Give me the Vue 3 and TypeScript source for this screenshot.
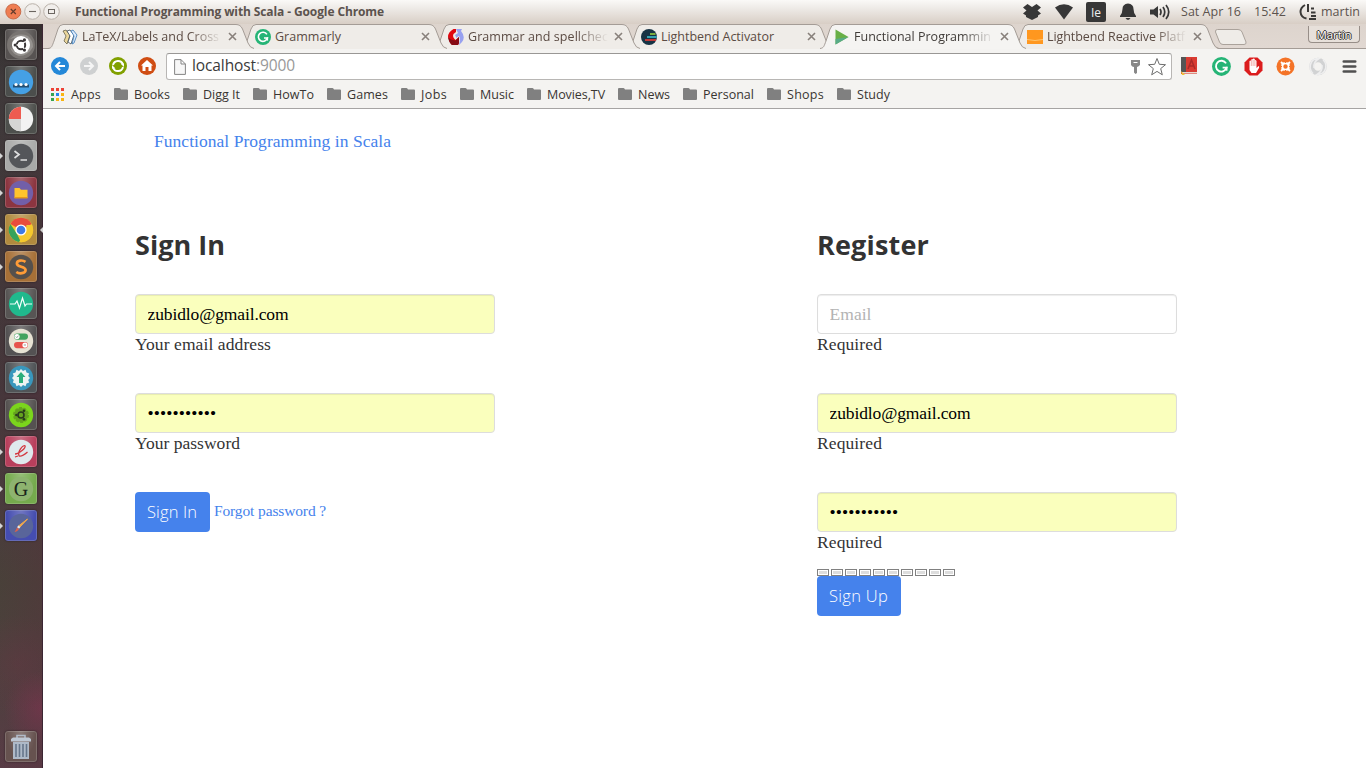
<script setup lang="ts">
import type { Directive } from 'vue'

// Spreads the letters of an element so its text spans the given width in pixels.
const vFit: Directive<HTMLElement, number> = {
  mounted(el, binding) {
    const text = el instanceof HTMLInputElement ? el.value || el.placeholder : (el.textContent ?? '').trim()
    const style = getComputedStyle(el)
    const ctx = document.createElement('canvas').getContext('2d')
    if (!ctx || !text) return
    ctx.font = `${style.fontWeight} ${style.fontSize} ${style.fontFamily}`
    const natural = ctx.measureText(text).width
    el.style.letterSpacing = `${((binding.value - natural) / text.length).toFixed(3)}px`
  },
}

interface LauncherItem {
  name: string
  tile: string
  running: boolean
  focused?: boolean
  art: string
}

const launcher: LauncherItem[] = [
  { name: 'dash', tile: '#575352', running: false, art: '<circle cx="16" cy="16" r="14" fill="#797572"/><path d="M5 10Q13 3 23 7Q28 11 28 18Q23 27 14 27Q7 25 5 18Q9 23 16 24Q23 21 24 15Q21 9 14 8Q9 9 5 10Z" fill="#a5a19e" opacity=".65"/><circle cx="16" cy="16" r="9" fill="#fff"/><circle cx="16" cy="16" r="4.2" fill="none" stroke="#393536" stroke-width="2"/><path d="M16 16L23 10M16 16L22 23M16 16H7" stroke="#fff" stroke-width="1.4"/><circle cx="16" cy="16" r="3" fill="#fff"/><circle cx="19.4" cy="10.9" r="1.6" fill="#393536"/><circle cx="19.4" cy="21.1" r="1.6" fill="#393536"/><circle cx="10.2" cy="16" r="1.6" fill="#393536"/>' },
  { name: 'messages', tile: '#4b4e4c', running: false, art: '<circle cx="16" cy="16" r="12.2" fill="#45a0e5"/><path d="M8 18.5H24V21.5H8Z" fill="#244f73"/><circle cx="11" cy="18.5" r="1.6" fill="#fff"/><circle cx="16" cy="18.5" r="1.6" fill="#fff"/><circle cx="21" cy="18.5" r="1.6" fill="#fff"/>' },
  { name: 'disk usage', tile: '#4e504d', running: false, art: '<circle cx="16" cy="16" r="12.2" fill="#f2f2f2"/><path d="M16 16V3.8A12.2 12.2 0 0 0 3.8 16Z" fill="#ee5b50"/><path d="M16 16H3.8A12.2 12.2 0 0 0 16 28.2Z" fill="#d5d5d4"/>' },
  { name: 'terminal', tile: '#a9aaa9', running: true, art: '<circle cx="16" cy="16" r="12.2" fill="#54565a"/><path d="M9.5 11L14 14.5L9.5 18M15.5 20H22" fill="none" stroke="#dedfe0" stroke-width="1.7"/>' },
  { name: 'files', tile: '#8c3540', running: true, art: '<circle cx="16" cy="16" r="12.2" fill="#725fa8"/><path d="M9.5 11H14.5L16 12.7H22.5V21H9.5Z" fill="#ffc52b"/><path d="M9.5 20H22.5V21.5H9.5Z" fill="#e79a19"/>' },
  { name: 'chrome', tile: '#b18a3e', running: true, focused: true, art: '<circle cx="16" cy="16" r="12.2" fill="#f5c82d"/><path d="M16 16L5.4 9.9A12.2 12.2 0 0 1 26.6 9.9Z" fill="#e94c3c"/><path d="M5.4 9.9L12 20L16 28.2A12.2 12.2 0 0 1 5.4 9.9Z" fill="#35a35b"/><path d="M14 28L20.5 17L21.5 11H27A12.2 12.2 0 0 1 14 28Z" fill="#f5c82d"/><circle cx="16" cy="16" r="5.6" fill="#fff"/><circle cx="16" cy="16" r="4.3" fill="#3e7ae5"/>' },
  { name: 'sublime', tile: '#a77037', running: true, art: '<circle cx="16" cy="16" r="12.2" fill="#55504c"/><path d="M20.5 10.8C17.5 8.8 12 9 11.9 12.5C11.9 16.6 20.6 14.8 20.6 19C20.5 22.8 14 23 11.3 21" fill="none" stroke="#ff9c37" stroke-width="2.7"/>' },
  { name: 'monitor', tile: '#575554', running: false, art: '<circle cx="16" cy="16" r="12.2" fill="#20b98d"/><path d="M5 16H10L12 13L14.5 20L17.5 10L20 18L21.5 16H27" fill="none" stroke="#f4fffc" stroke-width="1.2"/>' },
  { name: 'tweaks', tile: '#545253', running: false, art: '<circle cx="16" cy="16" r="12.2" fill="#e7e3d4"/><rect x="9" y="8.5" width="14" height="6.2" rx="3.1" fill="#43a35e"/><rect x="9" y="17" width="14" height="6.2" rx="3.1" fill="#e7524d"/><circle cx="12" cy="11.6" r="2.6" fill="#fff"/><circle cx="20" cy="20.1" r="2.6" fill="#fff"/><path d="M10.8 11.6L11.8 12.6L13.4 10.7M18.8 20H21" stroke="#697568" stroke-width=".7" fill="none"/>' },
  { name: 'updater', tile: '#505457', running: false, art: '<circle cx="16" cy="16" r="12.2" fill="#3997bd"/><path d="M16 7L18 9L20.5 7.8L21.5 10.5L24.2 11.5L23.2 14L25 16L23.2 18L24.2 20.5L21.5 21.5L20.5 24.2L18 23L16 25L14 23L11.5 24.2L10.5 21.5L7.800 20.5L8.800 18L7 16L8.800 14L7.800 11.5L10.5 10.5L11.5 7.800L14 9Z" fill="#edf4f2"/><path d="M16 10L20.5 15H18V21H14V15H11.5Z" fill="#2bae7b"/>' },
  { name: 'ubuntu tweak', tile: '#555251', running: false, art: '<circle cx="16" cy="16" r="12.2" fill="#7bd51c"/><circle cx="16" cy="16" r="7" fill="#65a31f" stroke="#65a31f" stroke-width="2" stroke-dasharray="3 1.4"/><circle cx="16" cy="16" r="3" fill="none" stroke="#293a1d" stroke-width="1.6"/><circle cx="19" cy="11.8" r="1.3" fill="#293a1d"/><circle cx="19" cy="20.2" r="1.3" fill="#293a1d"/><circle cx="11.4" cy="16" r="1.3" fill="#293a1d"/>' },
  { name: 'reader', tile: '#b83f5c', running: true, art: '<circle cx="16" cy="16" r="12.2" fill="#dfe9ed"/><path d="M10 18C14 18 21.5 11.5 20 9.8C17.5 8.5 12.5 16 14 19.8C16 21.5 19 19 22.5 16M10 21L13 20" fill="none" stroke="#d33740" stroke-width="1.3"/>' },
  { name: 'notes', tile: '#75aa4d', running: true, art: '<circle cx="16" cy="16" r="12.2" fill="#8db36f"/><text x="16" y="22.5" text-anchor="middle" font-family="Liberation Serif, serif" font-size="20" fill="#18231a">G</text>' },
  { name: 'paint', tile: '#454db0', running: true, art: '<circle cx="16" cy="16" r="12.2" fill="#59659a"/><path d="M22.5 9L15 17L13.5 16Z" fill="#efa84d" stroke="#efa84d" stroke-width="1"/><path d="M15.4 17L14 18.7L12 17.2L13.4 15.6Z" fill="#e7e7e7"/><path d="M12 17.5L14 19C13 21 11 22 9.5 21.8Q11 20.3 12 17.5Z" fill="#dc614b"/>' },
]

const trash = '<path d="M12 7V4.5H20V7" fill="none" stroke="#b0bac8" stroke-width="1.6"/><path d="M6 8L8 6.5H24L26 8V10.5H6Z" fill="#bdc7d4"/><path d="M8 11H24V28H8Z" fill="#aeb9c8"/><path d="M11 13V26M14.5 13V26M18 13V26M21.5 13V26" stroke="#66768b" stroke-width="1.6"/>'

interface Tab {
  title: string
  width: number
  active?: boolean
  faded?: boolean
  icon: string
}

const grammarly = '<circle cx="8" cy="8" r="8" fill="#25b476"/><path d="M11.9 5.4A4.6 4.6 0 1 0 12.4 9H9" fill="none" stroke="#fff" stroke-width="1.6"/><path d="M12.4 8.3V11.6" stroke="#fff" stroke-width="1.4"/>'

const tabs: Tab[] = [
  { title: 'LaTeX/Labels and Cross', width: 137, faded: true, icon: '<path d="M1 2L4 1L8 6L5 15L2 12L4 7Z" fill="#ead69c" stroke="#56513b" stroke-width=".7"/><path d="M5 2L8 1L12 6L9 15L6 13L8 7Z" fill="#fff" stroke="#3d4c57" stroke-width=".8"/><path d="M9 2L11 1L15 6L12 14L10 15L12 7Z" fill="#dceafb" stroke="#3878b7" stroke-width=".8"/>' },
  { title: 'Grammarly', width: 66, icon: grammarly },
  { title: 'Grammar and spellchec', width: 140, faded: true, icon: '<path d="M5.5 0Q0 3 0 8Q1 13 4 16H10L11 14V8L7.5 11Q4 8 5.5 5L8 3V0Z" fill="#e00810"/><path d="M0 8Q1 14 4 16H10L11 14V8L7.5 11.5Q2 11 0 8Z" fill="#860b14"/><path d="M8 0H14L13 2Q18 8 14 13L11 16Q13 8 10.5 7L8.5 9L7 6L10 4Z" fill="#98a1f0"/>' },
  { title: 'Lightbend Activator', width: 113, icon: '<circle cx="8" cy="8" r="8" fill="#173344"/><path d="M9 5H14.5" stroke="#86bd40" stroke-width="1.8"/><path d="M6 8H15.8" stroke="#39afbe" stroke-width="1.8"/><path d="M4 11H15" stroke="#d33b37" stroke-width="1.8"/>' },
  { title: 'Functional Programmin', width: 137, active: true, faded: true, icon: '<path d="M1.5 .5L14.5 8L1.5 15.5Z" fill="#68af46"/><path d="M1.5 10L14.5 8L1.5 15.5Z" fill="#58ab88"/>' },
  { title: 'Lightbend Reactive Platf', width: 138, faded: true, icon: '<rect y="1" width="16" height="14" fill="#ff971f"/><path d="M0 10.5Q8 12.5 16 10.5" fill="none" stroke="#ffc56e"/>' },
]

const bookmarks = [
  { label: 'Books', width: 36, step: 69 },
  { label: 'Digg It', width: 37, step: 70 },
  { label: 'HowTo', width: 41, step: 74 },
  { label: 'Games', width: 41, step: 74 },
  { label: 'Jobs', width: 26, step: 59 },
  { label: 'Music', width: 34, step: 67 },
  { label: 'Movies,TV', width: 58, step: 91 },
  { label: 'News', width: 32, step: 65 },
  { label: 'Personal', width: 51, step: 84 },
  { label: 'Shops', width: 37, step: 70 },
  { label: 'Study', width: 33, step: 70 },
]
</script>

<template>
  <div class="desktop">
    <header class="panel">
      <svg class="win-buttons" width="62" height="24" viewBox="0 0 62 24">
        <circle cx="13.3" cy="11.5" r="7.5" fill="#ef7d52" stroke="#c96b49" />
        <path d="M10.8 9L15.8 14M15.8 9L10.8 14" stroke="#633c2c" stroke-width="1.2" />
        <circle cx="32.5" cy="11.5" r="7.8" fill="#f1eeeb" stroke="#bab2aa" />
        <path d="M29 11.5H36" stroke="#6b6661" stroke-width="1.1" />
        <circle cx="51.5" cy="11.5" r="7.8" fill="#f1eeeb" stroke="#bab2aa" />
        <rect x="48.5" y="9.5" width="6" height="4" fill="none" stroke="#6b6661" />
      </svg>
      <b class="window-title" v-fit="309">Functional Programming with Scala - Google Chrome</b>
      <svg class="indicators" width="152" height="24" viewBox="1020 0 152 24" fill="#373737">
        <path d="M1027.5 4L1032 7L1036.5 4L1041 7.5L1037.5 10.5L1041 13.5L1038 15.5V17L1032 20L1026 17V15.5L1023 13.5L1026.5 10.5L1023 7.5Z" />
        <path d="M1055 7.5Q1064 .8 1073 7.5L1064 19.5Z" />
        <rect x="1086" y="2" width="20" height="20" rx="2" />
        <text x="1096" y="16.8" text-anchor="middle" class="kbd">Ie</text>
        <path d="M1120 16Q1122.5 13 1122.5 9Q1122.5 4 1128 3.5Q1133.5 4 1133.5 9Q1133.5 13 1136 16V17H1120ZM1125.5 18H1130.5L1129 19.7H1127Z" />
        <path d="M1150 9.5H1153.5L1158 6V18L1153.5 14.5H1150Z" />
        <path d="M1160 9Q1162 12 1160 15M1163 7Q1166.5 12 1163 17M1166 5Q1171.5 12 1166 19" fill="none" stroke="#373737" stroke-width="1.7" />
      </svg>
      <span class="clock-date" v-fit="60">Sat Apr 16</span>
      <span class="clock-time" v-fit="32">15:42</span>
      <svg class="session" width="18" height="24" viewBox="0 0 18 24" fill="none" stroke="#3b3937" stroke-width="2">
        <path d="M6 5Q1.5 7.5 1.5 12Q2 17.5 7.5 18.5M9 4V12M12 8.5H15M12 12.5H16.5M12 16H17M10 19H17" />
      </svg>
      <span class="user" v-fit="39">martin</span>
    </header>

    <div class="workspace">
      <aside class="launcher">
        <div v-for="item in launcher" :key="item.name" class="slot">
          <i v-if="item.running" class="pip"></i>
          <i v-if="item.focused" class="pip focused"></i>
          <div class="tile" :style="{ backgroundColor: item.tile }">
            <svg width="32" height="32" viewBox="0 0 32 32" v-html="item.art"></svg>
          </div>
        </div>
        <div class="slot trash">
          <div class="tile bin"><svg width="32" height="32" viewBox="0 0 32 32" v-html="trash"></svg></div>
        </div>
      </aside>

      <section class="browser">
        <nav class="tabstrip">
          <div v-for="(tab, i) in tabs" :key="tab.title" class="tab" :class="{ active: tab.active }" :style="{ zIndex: tab.active ? 20 : 10 - i }">
            <svg class="shape" width="208" height="25" viewBox="0 0 208 25">
              <path d="M0 25C4 24 4 22 6 17L10 5Q11.5 .5 15 .5H188Q192.5 .5 194.5 5L200 19Q202 24.5 206 25Z" :fill="tab.active ? '#f5f4f2' : '#efece8'" />
              <path d="M0 24.5C4 24 4 22 6 17L10 5Q11.5 .5 15 .5H188Q192.5 .5 194.5 5L200 19Q202 24 206 24.5" fill="none" stroke="#a49c96" />
            </svg>
            <svg class="favicon" width="16" height="16" viewBox="0 0 16 16" v-html="tab.icon"></svg>
            <span class="tab-title" :class="{ faded: tab.faded }"><span v-fit="tab.width">{{ tab.title }}</span></span>
            <svg class="close" width="9" height="9" viewBox="0 0 9 9"><path d="M1 1L8 8M8 1L1 8" stroke="#88807b" stroke-width="1.6" /></svg>
          </div>
          <svg class="new-tab" width="34" height="20" viewBox="0 0 34 20">
            <path d="M3.5 1.5H24Q27 1.5 28 4L32 14Q32.5 16.5 30 16.5H9Q6.5 16.5 5.5 14L1.5 4Q1 1.5 3.5 1.5Z" fill="#efece8" stroke="#aaa29b" />
          </svg>
          <div class="profile"><span v-fit="35">Martin</span></div>
        </nav>

        <div class="toolbar">
          <svg class="nav-icons" width="112" height="20" viewBox="0 0 112 20" fill="none" stroke-width="2">
            <circle cx="9" cy="10" r="9" fill="#2488d8" />
            <path d="M14 10H5M9 6L5 10L9 14" stroke="#fff" />
            <circle cx="38" cy="10" r="9" fill="#ced0d1" />
            <path d="M33 10H42M38 6L42 10L38 14" stroke="#f5f5f5" />
            <circle cx="67" cy="10" r="9" fill="#81a000" />
            <path d="M62 9A5.2 5.2 0 0 1 72 8.5M72 11A5.2 5.2 0 0 1 62 11.5" stroke="#fff" stroke-width="1.9" />
            <path d="M69.5 7.5H73V11ZM64.5 12.5H61V9Z" fill="#fff" />
            <circle cx="96" cy="10" r="9" fill="#d04d13" />
            <path d="M96 4L102 9.5H100.5V15H97.5V11H94.5V15H91.5V9.5H90Z" fill="#fff" />
          </svg>
          <div class="omnibox">
            <svg width="12" height="16" viewBox="0 0 12 16"><path d="M.6.6H7L11.4 5V15.4H.6ZM7 .6V5H11.4" fill="#f7f7f7" stroke="#858585" /></svg>
            <span class="url" v-fit="103">localhost<span class="port">:9000</span></span>
            <svg class="key" width="12" height="16" viewBox="0 0 12 16"><path d="M1 1H10V6Q8 8 7 8V14L5.5 15L4 13.5V8Q2 8 1 6Z" fill="#888" /><path d="M3.5 3.5H7.5" stroke="#fff" /></svg>
            <svg class="star" width="20" height="20" viewBox="0 0 20 20"><path d="M10 1.5L12.3 7.3L18.5 7.7L13.7 11.6L15.3 17.8L10 14.4L4.7 17.8L6.3 11.6L1.5 7.7L7.7 7.3Z" fill="#fff" stroke="#6d6d6d" stroke-linejoin="round" /></svg>
          </div>
          <svg class="extensions" width="180" height="22" viewBox="1180 55 180 22">
            <path d="M1181 57H1197V74H1181Z" fill="#d93b32" />
            <path d="M1181 57H1186V72H1181Z" fill="#555" />
            <path d="M1182 72H1197V73.5H1182Z" fill="#e8d9cf" />
            <path d="M1181 71L1185 75L1182 75Z" fill="#f2c531" />
            <path d="M1188 69L1191.5 60L1195 69M1189 66H1194" fill="none" stroke="#a92a29" stroke-width="1.5" />
            <g transform="translate(1212 57) scale(1.18)" v-html="grammarly"></g>
            <path d="M1249.5 57.5H1257.5L1262.5 62.5V70.5L1257.5 75.5H1249.5L1244.5 70.5V62.5Z" fill="#db1c1d" />
            <path d="M1249.5 70V61Q1250.5 60 1251.3 61V59.5Q1252.3 58.5 1253 59.5V58.8Q1254 58 1254.8 59V60Q1256 59.5 1256.5 61V68L1258.5 66Q1259.7 66.5 1259 68L1256 73H1251.5Z" fill="#fff" />
            <path d="M1251.3 61V66M1253.1 60V66M1254.9 60V66" stroke="#e77976" stroke-width=".6" />
            <circle cx="1285.5" cy="66.5" r="9" fill="#f47327" />
            <circle cx="1285.5" cy="66.5" r="3.4" fill="none" stroke="#fff" stroke-width="2.4" />
            <path d="M1281 62L1283 64M1290 62L1288 64M1281 71L1283 69M1290 71L1288 69" stroke="#fff" stroke-width="1.8" />
            <path d="M1285.5 61.5V63M1285.5 70V71.5M1280.5 66.5H1282M1289 66.5H1290.5" stroke="#f47327" stroke-width="1.5" />
            <circle cx="1318" cy="66.5" r="6.5" fill="none" stroke="#d1d2d3" stroke-width="4.6" />
            <path d="M1313 73.5Q1308 68 1311.500 62Q1313.500 58.5 1319 58.5Q1313 62 1314 68M1323 59.5Q1328 65 1324.500 71Q1322 74.500 1317 74.5Q1323 71 1322 65" fill="none" stroke="#eeeeef" stroke-width="1.5" />
            <path d="M1343.8 61.5H1355.2M1343.8 66.5H1355.2M1343.8 71.5H1355.2" stroke="#505050" stroke-width="2.7" stroke-linecap="round" />
          </svg>
        </div>

        <nav class="bookmarks">
          <div class="apps">
            <svg width="13" height="13" viewBox="0 0 13 13">
              <path d="M0 0H3V3H0ZM5 0H8V3H5ZM10 0H13V3H10Z" fill="#ed4236" />
              <path d="M0 5H3V8H0ZM0 10H3V13H0Z" fill="#37a451" />
              <path d="M5 5H8V8H5Z" fill="#2886ee" />
              <path d="M10 5H13V8H10ZM5 10H8V13H5ZM10 10H13V13H10Z" fill="#f9b512" />
            </svg>
            <span v-fit="30">Apps</span>
          </div>
          <div v-for="mark in bookmarks" :key="mark.label" class="bookmark" :style="{ width: mark.step + 'px' }">
            <svg width="14" height="12" viewBox="0 0 14 12"><path d="M0 1Q0 0 1 0H5.5Q6.5 0 7 1.5H13Q14 1.5 14 2.5V11Q14 12 13 12H1Q0 12 0 11Z" fill="#808080" /></svg>
            <span v-fit="mark.width">{{ mark.label }}</span>
          </div>
        </nav>

        <main class="page">
          <a class="brand" v-fit="237">Functional Programming in Scala</a>
          <div class="forms">
            <form class="form">
              <h2 v-fit="90">Sign In</h2>
              <div class="field">
                <input class="filled" type="text" value="zubidlo@gmail.com" v-fit="141" />
                <label v-fit="136">Your email address</label>
              </div>
              <div class="field">
                <input class="filled" type="password" value="12345678901" />
                <label v-fit="105">Your password</label>
              </div>
              <div class="actions">
                <button type="button" class="sign-in"><span v-fit="50">Sign In</span></button>
                <a class="forgot" v-fit="112">Forgot password ?</a>
              </div>
            </form>
            <form class="form">
              <h2 v-fit="112">Register</h2>
              <div class="field">
                <input type="text" placeholder="Email" v-fit="42" />
                <label v-fit="65">Required</label>
              </div>
              <div class="field">
                <input class="filled" type="text" value="zubidlo@gmail.com" v-fit="141" />
                <label v-fit="65">Required</label>
              </div>
              <div class="field last">
                <input class="filled" type="password" value="12345678901" />
                <label v-fit="65">Required</label>
              </div>
              <div class="strength"><i v-for="n in 10" :key="n"></i></div>
              <button type="button" class="sign-up"><span v-fit="59">Sign Up</span></button>
            </form>
          </div>
        </main>
      </section>
    </div>
  </div>
</template>

<style>
html,
body {
  margin: 0;
  overflow: hidden;
}
</style>

<style scoped>
* {
  box-sizing: border-box;
}
.desktop {
  width: 1366px;
  height: 768px;
  display: flex;
  flex-direction: column;
  font-family: "Open Sans", "Noto Sans", sans-serif;
  font-size: 12.5px;
  color: #403c39;
  white-space: nowrap;
  overflow: hidden;
}
svg {
  display: block;
  flex: none;
}
.panel {
  height: 24px;
  flex: none;
  display: flex;
  align-items: center;
  background: linear-gradient(#faf9f7, #ece8e4 40%, #d8cec5);
  line-height: 24px;
  color: #5c534e;
}
.win-buttons {
  margin-right: 13px;
}
.window-title {
  width: 309px;
  font-size: 12px;
}
.indicators {
  margin-left: 636px;
}
.kbd {
  font: 12px "Open Sans", sans-serif;
  fill: #eee;
}
.clock-date {
  width: 60px;
  margin-left: 9px;
}
.clock-time {
  width: 32px;
  margin-left: 13px;
}
.session {
  margin-left: 13px;
}
.user {
  margin-left: 4px;
}
.workspace {
  flex: 1;
  display: flex;
  min-height: 0;
}
.launcher {
  width: 43px;
  flex: none;
  display: flex;
  flex-direction: column;
  padding-top: 5px;
  background:
    radial-gradient(circle at 42px 685px, rgba(140, 50, 85, 0.45), transparent 38px),
    radial-gradient(circle at 18px 640px, rgba(110, 50, 70, 0.3), transparent 50px),
    radial-gradient(ellipse at 44px 530px, rgba(95, 40, 60, 0.35), transparent 80px),
    linear-gradient(#2c2e2b, #3b3b3a 7%, #3e3a39 35%, #42393b 50%, #46403d 66%, #454539 75%, #4a453e 87%, #573f47);
  border-right: 1px solid #3b2633;
}
.slot {
  position: relative;
  height: 37px;
  padding-left: 5px;
}
.tile {
  width: 32px;
  height: 31px;
  border-radius: 3px;
  background-image: radial-gradient(ellipse at 50% 0, rgba(255, 255, 255, 0.24), transparent 65%);
  box-shadow: inset 0 0 0 1px rgba(225, 225, 220, 0.2), 0 0 2px rgba(0, 0, 0, 0.5);
}
.tile.bin {
  background-color: #66524f;
}
.trash {
  margin-top: auto;
  height: 37px;
}
.pip {
  position: absolute;
  left: 0;
  top: 13px;
  border-left: 3px solid #d5d5d5;
  border-top: 3px solid transparent;
  border-bottom: 3px solid transparent;
}
.pip.focused {
  left: auto;
  right: -1px;
  border-left: 0;
  border-right: 3px solid #d5d5d5;
}
.browser {
  flex: 1;
  display: flex;
  flex-direction: column;
  min-width: 0;
  background: #fff;
}
.tabstrip {
  height: 25px;
  flex: none;
  display: flex;
  align-items: flex-start;
  padding-left: 5px;
  background: linear-gradient(#ddd4cd, #e1d8d2);
  box-shadow: inset 0 -1px #a49c96;
}
.tab {
  position: relative;
  width: 193px;
  height: 25px;
  display: flex;
  align-items: center;
  padding-left: 14px;
}
.shape {
  position: absolute;
  left: 0;
  top: 0;
}
.favicon,
.tab-title,
.close {
  position: relative;
}
.tab-title {
  width: 146px;
  margin-left: 4px;
  overflow: hidden;
  color: #5b4b43;
  line-height: 24px;
}
.active .tab-title {
  color: #403c39;
}
.faded {
  -webkit-mask-image: linear-gradient(90deg, #000 108px, transparent 140px);
  mask-image: linear-gradient(90deg, #000 108px, transparent 140px);
}
.new-tab {
  margin: 4px 0 0 8px;
}
.profile {
  width: 52px;
  height: 17px;
  margin: 2px 6px 0 auto;
  border: 1px solid #978e88;
  border-top: 0;
  border-radius: 0 0 4px 4px;
  background: #e7e0da;
  text-align: center;
  font: 11.5px/17px "Open Sans", sans-serif;
  color: #fff;
  text-shadow: 1px 0 #35302d, -1px 0 #35302d, 0 1px #35302d, 0 -1px #35302d;
}
.toolbar {
  height: 34px;
  flex: none;
  display: flex;
  align-items: center;
  padding-left: 8px;
  background: #f4f3f1;
}
.omnibox {
  width: 1006px;
  height: 27px;
  margin: 1px 8px 0 3px;
  padding: 0 4px 0 7px;
  display: flex;
  align-items: center;
  background: #fff;
  border: 1px solid #b8b6b4;
  border-top-color: #999795;
  border-radius: 3px;
}
.url {
  margin-left: 6px;
  padding-bottom: 2px;
  font-size: 15.5px;
  line-height: 23px;
  color: #3a3a3a;
}
.port {
  color: #999;
}
.key {
  margin-left: auto;
}
.star {
  margin-left: 5px;
}
.bookmarks {
  height: 26px;
  flex: none;
  display: flex;
  align-items: center;
  padding: 0 0 3px 8px;
  background: #f4f3f1;
  border-bottom: 1px solid #a6a4a3;
  color: #393532;
}
.apps,
.bookmark {
  display: flex;
  align-items: center;
  flex: none;
}
.apps {
  width: 63px;
  gap: 7px;
}
.bookmark {
  gap: 6px;
}
.page {
  flex: 1;
  color: #333;
  font-family: "Liberation Serif", serif;
  font-size: 17.5px;
}
a {
  color: #4582ec;
}
.brand {
  display: block;
  margin: 21px 0 0 111px;
  line-height: 22px;
}
.forms {
  display: grid;
  grid-template-columns: 360px 360px;
  column-gap: 322px;
  padding: 75px 0 0 92px;
}
h2 {
  margin: 0 0 32px;
  font: bold 27px/35px "Open Sans", sans-serif;
  color: #333;
}
.field {
  height: 99px;
}
.field.last {
  height: 77px;
}
input {
  display: block;
  width: 360px;
  height: 40px;
  padding: 1px 12px 0 11.5px;
  border: 1px solid #ddd;
  border-radius: 4px;
  background: #fff;
  box-shadow: inset 0 1px 1px rgba(0, 0, 0, 0.075);
  font: 17.5px "Liberation Serif", serif;
  color: #000;
}
input[type="password"] {
  letter-spacing: 0.12px;
}
input::placeholder {
  color: #b3b3b3;
}
input.filled {
  background: #faffbd;
}
label {
  display: block;
  line-height: 20px;
}
.actions {
  display: flex;
  align-items: center;
  gap: 4px;
}
button {
  display: block;
  height: 40px;
  padding: 0 0 2px 12px;
  border: 0;
  border-radius: 4px;
  background: #4582ec;
  color: #fff;
  text-align: left;
  font: 300 16.5px "Open Sans", Lato, sans-serif;
}
.sign-in {
  width: 75px;
}
.sign-up {
  width: 84px;
}
.forgot {
  padding-bottom: 2px;
  font-size: 15.5px;
}
.strength {
  display: flex;
  gap: 2px;
}
.strength i {
  width: 12px;
  height: 7px;
  border: 1px solid #808080;
  padding: 1px;
  background: #ddd content-box;
}
</style>
